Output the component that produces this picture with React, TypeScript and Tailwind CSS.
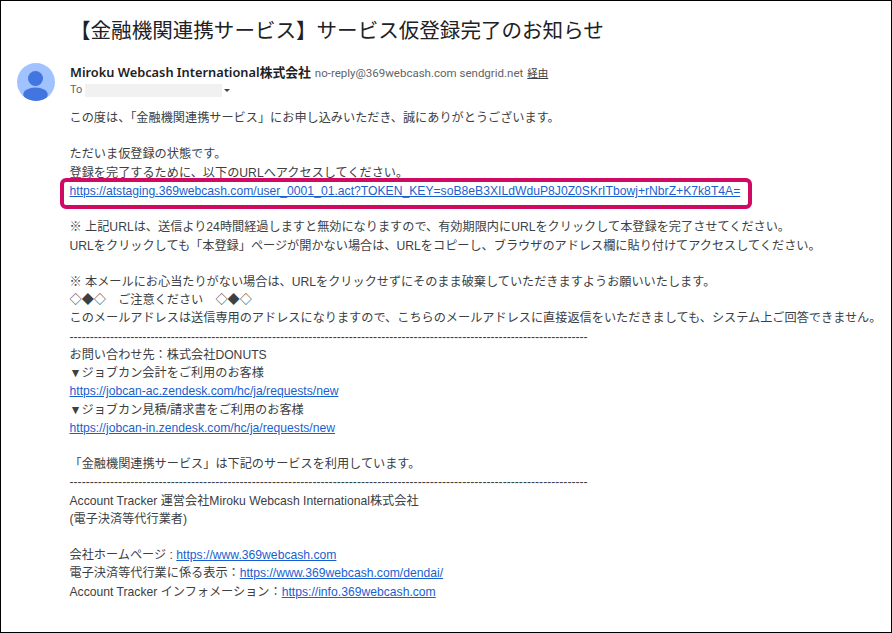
import React from 'react';

const body = '[font-family:"Liberation_Sans","Noto_Sans_CJK_JP",sans-serif]';

function Mail({ href }: { href: string }) {
  return <a href={href} className="text-[#1a5fd0] underline">{href}</a>;
}

function Line({ children }: { children?: React.ReactNode }) {
  return <div className="h-[18.23px] whitespace-nowrap">{children}</div>;
}

export default function App() {
  return (
    <div className={`w-[892px] h-[633px] bg-white border border-black overflow-hidden ${body}`}>
      <h1 className="ml-[69px] mt-[15px] h-[32px] text-[20.55px] leading-[30px] font-normal text-[#202124] whitespace-nowrap">
        【金融機関連携サービス】サービス仮登録完了のお知らせ
      </h1>
      <div className="flex ml-[15.5px] mt-[15px]">
        <svg width="38" height="38" viewBox="0 0 38 38" className="shrink-0">
          <defs>
            <clipPath id="avatar"><circle cx="19" cy="19" r="19" /></clipPath>
          </defs>
          <circle cx="19" cy="19" r="19" fill="#a0c3ff" />
          <g clipPath="url(#avatar)" fill="#4375e0">
            <circle cx="18.5" cy="15.5" r="7.5" />
            <ellipse cx="18.5" cy="31.5" rx="12.2" ry="7" />
          </g>
        </svg>
        <div className="ml-[15.5px]">
          <div className="flex items-baseline h-[18px] whitespace-nowrap">
            <span className="text-[12.8px] font-semibold text-[#202124] [font-family:'Noto_Sans','Noto_Sans_CJK_JP',sans-serif]">Miroku Webcash International株式会社</span>
            <span className="ml-[4px] text-[11.5px] text-[#5f6368] [font-family:Roboto,sans-serif]">no-reply@369webcash.com sendgrid.net</span>
            <span className="ml-[4px] text-[10.5px] text-[#3c4043] underline">経由</span>
          </div>
          <div className="flex items-center h-[18px] text-[11px] text-[#5f6368] [font-family:Roboto,sans-serif]">
            <span>To</span>
            <span className="ml-[3px] w-[137px] h-[13px] bg-[#f1f1f1]"></span>
            <span className="ml-[2px] w-0 h-0 border-x-[3px] border-x-transparent border-t-[3px] border-t-[#444]"></span>
          </div>
        </div>
      </div>
      <div className="ml-[68.5px] mt-[8px] text-[12.17px] leading-[18.23px] text-[#3c4043]">
        <Line>この度は、「金融機関連携サービス」にお申し込みいただき、誠にありがとうございます。</Line>
        <Line />
        <Line>ただいま仮登録の状態です。</Line>
        <Line>登録を完了するために、以下のURLへアクセスしてください。</Line>
        <div className="relative">
          <Line><Mail href="https://atstaging.369webcash.com/user_0001_01.act?TOKEN_KEY=soB8eB3XILdWduP8J0Z0SKrITbowj+rNbrZ+K7k8T4A=" /></Line>
          <div className="absolute left-[-9.5px] top-[-4px] w-[692px] h-[31px] border-[4px] border-[#d00a63] rounded-[6px]"></div>
        </div>
        <Line />
        <Line>※ 上記URLは、送信より24時間経過しますと無効になりますので、有効期限内にURLをクリックして本登録を完了させてください。</Line>
        <Line>URLをクリックしても「本登録」ページが開かない場合は、URLをコピーし、ブラウザのアドレス欄に貼り付けてアクセスしてください。</Line>
        <Line />
        <Line>※ 本メールにお心当たりがない場合は、URLをクリックせずにそのまま破棄していただきますようお願いいたします。</Line>
        <Line>◇◆◇　ご注意ください　◇◆◇</Line>
        <Line>このメールアドレスは送信専用のアドレスになりますので、こちらのメールアドレスに直接返信をいただきましても、システム上ご回答できません。</Line>
        <Line>{'-'.repeat(128)}</Line>
        <Line>お問い合わせ先：株式会社DONUTS</Line>
        <Line>▼ジョブカン会計をご利用のお客様</Line>
        <Line><Mail href="https://jobcan-ac.zendesk.com/hc/ja/requests/new" /></Line>
        <Line>▼ジョブカン見積/請求書をご利用のお客様</Line>
        <Line><Mail href="https://jobcan-in.zendesk.com/hc/ja/requests/new" /></Line>
        <Line />
        <Line>「金融機関連携サービス」は下記のサービスを利用しています。</Line>
        <Line>{'-'.repeat(128)}</Line>
        <Line>Account Tracker 運営会社Miroku Webcash International株式会社</Line>
        <Line>(電子決済等代行業者)</Line>
        <Line />
        <Line>会社ホームページ : <Mail href="https://www.369webcash.com" /></Line>
        <Line>電子決済等代行業に係る表示：<Mail href="https://www.369webcash.com/dendai/" /></Line>
        <Line>Account Tracker インフォメーション：<Mail href="https://info.369webcash.com" /></Line>
      </div>
    </div>
  );
}
